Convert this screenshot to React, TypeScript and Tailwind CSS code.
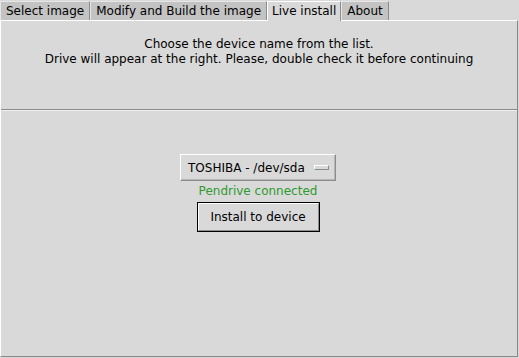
const tabs = ['Select image', 'Modify and Build the image', 'Live install', 'About'];
const active = 'Live install';

export default function App() {
  return (
    <div
      className="w-[519px] h-[358px] bg-[#d9d9d9] text-black text-[12px] flex flex-col overflow-hidden"
      style={{ fontFamily: '"DejaVu Sans", sans-serif' }}
    >
      {/* tab strip */}
      <div className="flex items-end h-[20px]">
        {tabs.map(t =>
          t === active ? (
            <div
              key={t}
              className="h-[20px] px-[4px] bg-[#d9d9d9] border-t border-l border-t-white border-l-white border-r border-r-[#8c8c8c] leading-[18px] -mb-[1px] z-10"
            >
              {t}
            </div>
          ) : (
            <div
              key={t}
              className="h-[19px] px-[5px] bg-[#c3c3c3] border-t border-l border-t-[#e6e6e6] border-l-[#e6e6e6] border-r border-r-[#8c8c8c] leading-[18px]"
            >
              {t}
            </div>
          )
        )}
      </div>

      {/* notebook page */}
      <div className="flex-1 mr-[1px] mb-[1px] flex flex-col border-t border-l border-t-white border-l-white border-r border-b border-r-[#888888] border-b-[#888888]">
        <div className="h-[88px] flex flex-col items-center pt-[16px] leading-[15px]">
          <span>Choose the device name from the list.</span>
          <span>Drive will appear at the right. Please, double check it before continuing</span>
        </div>
        <div className="h-[2px] border-t border-t-[#8a8a8a] border-b border-b-[#f0f0f0]" />
        <div className="flex-1 flex flex-col items-center pt-[43px] pr-[2px]">
          <div className="w-[156px] h-[27px] flex items-center justify-between pl-[7px] pr-[6px] bg-[#d9d9d9] border border-t-white border-l-white border-r-[#8c8c8c] border-b-[#8c8c8c] shadow-[inset_-1px_-1px_0_#b5b5b5]">
            <span>TOSHIBA - /dev/sda</span>
            <span className="w-[15px] h-[5px] bg-[#d9d9d9] border border-t-white border-l-white border-r-[#8c8c8c] border-b-[#8c8c8c]" />
          </div>
          <div className="mt-[3px] text-[#2f9a2f] leading-[15px]">Pendrive connected</div>
          <div className="mt-[3px] w-[123px] h-[30px] border border-black">
            <div className="w-full h-full flex items-center justify-center border border-t-white border-l-white border-r-[#8c8c8c] border-b-[#8c8c8c]">
              Install to device
            </div>
          </div>
        </div>
      </div>
    </div>
  );
}
